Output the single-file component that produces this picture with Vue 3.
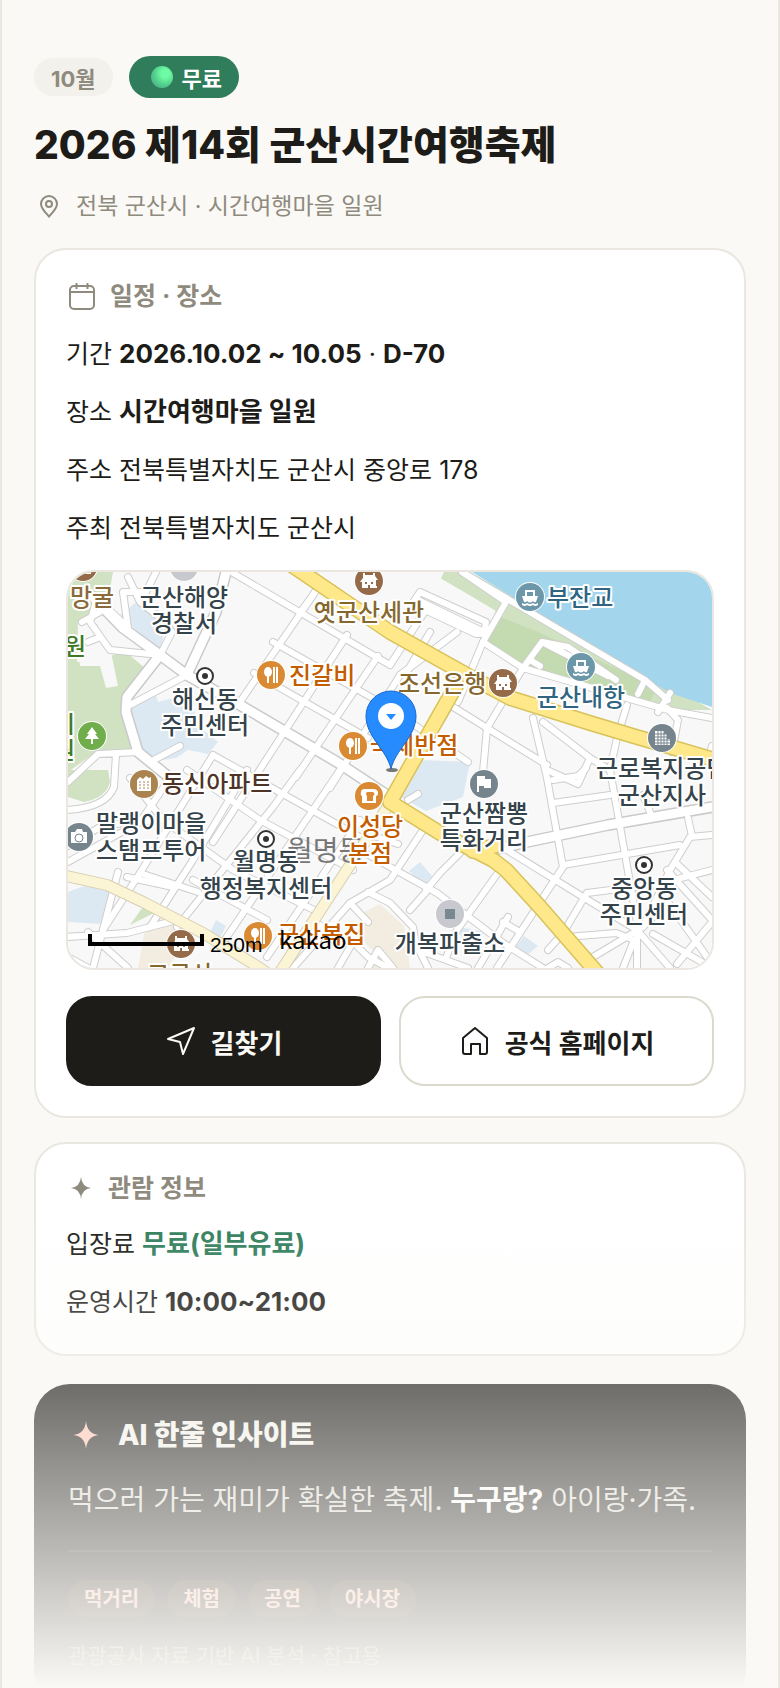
<template>
    <main class="page">
        <header class="hero">
            <div class="badges">
                <span class="badge month">10월</span>
                <span class="badge free"><span class="dot"></span>무료</span>
            </div>
            <h1 class="title">2026 제14회 군산시간여행축제</h1>
            <p class="region">
                <svg class="region-icon" viewBox="0 0 24 24" aria-hidden="true">
                    <path d="M12 22.5C8 18 4 14.5 4 10a8 8 0 0 1 16 0c0 4.500-4 8-8 12.500z" />
                    <circle cx="12" cy="10" r="3" />
                </svg>
                전북 군산시 · 시간여행마을 일원
            </p>
        </header>

        <section class="card">
            <h2 class="card-title">
                <svg class="card-icon" viewBox="0 0 32 32" aria-hidden="true">
                    <rect x="4" y="6" width="24" height="23" rx="4" />
                    <path d="M4 12h24M10.500 3v6M21.500 3v6" />
                </svg>
                일정 · 장소
            </h2>
            <p v-for="row in schedule" :key="row.label" class="row">
                {{ row.label }}
                <template v-if="row.strong"><strong>{{ row.strong }}</strong></template>
                <template v-if="row.text">{{ row.text }}</template>
                <template v-if="row.dday"> · <strong>{{ row.dday }}</strong></template>
            </p>

            <!-- Map -->
            <div class="map">
                <svg class="map-canvas" viewBox="0 0 644 396" preserveAspectRatio="xMidYMid slice" role="img" aria-label="지도">
                    <rect width="644" height="396" fill="#f8f8f8" />
                    <path v-for="(area, i) in areas" :key="'a' + i" :d="area.d" :fill="area.fill" />
                    <g fill="none" stroke-linejoin="round" stroke-linecap="round">
                        <path v-for="(d, i) in minorRoads" :key="'mc' + i" :d="d" stroke="#cecece" stroke-width="8" />
                        <path v-for="(d, i) in wideRoads" :key="'wc' + i" :d="d" stroke="#cacaca" stroke-width="12" />
                        <path v-for="(d, i) in minorRoads" :key="'m' + i" :d="d" stroke="#fff" stroke-width="6" />
                        <path v-for="(d, i) in wideRoads" :key="'w' + i" :d="d" stroke="#fff" stroke-width="9" />
                        <path v-for="(d, i) in paleRoads" :key="'pc' + i" :d="d" stroke="#d6cfb4" stroke-width="12" />
                        <path v-for="(d, i) in paleRoads" :key="'p' + i" :d="d" stroke="#fbf5d5" stroke-width="10" />
                        <path v-for="(d, i) in mainRoads" :key="'yc' + i" :d="d" stroke="#d8c25a" stroke-width="16" />
                        <path v-for="(d, i) in mainRoads" :key="'y' + i" :d="d" stroke="#ffe88a" stroke-width="13" />
                    </g>

                    <text class="district" x="219" y="289">월명동</text>

                    <g v-for="(poi, i) in pois" :key="'poi' + i" :transform="`translate(${poi.x} ${poi.y})`">
                        <circle r="15" fill="#fff" />
                        <circle r="14" :fill="poi.fill" />
                        <g v-if="poi.kind === 'food'" fill="#fff">
                            <ellipse cx="-3" cy="-3" rx="4" ry="5" />
                            <path d="M-4 0h2v8h-2zM2 -8h2v16h-2zM5 -8h2v16h-2z" />
                        </g>
                        <path v-else-if="poi.kind === 'house'" fill="#fff" fill-rule="evenodd" d="M-6-8h2v2h8v-2h2v3l3 4H7v6h1v2H-8V7h1V1h-2l3-4zM-4 1v2h2V1zM2 1v2h2V1zM-1 4v3h2V4z" />
                        <path v-else-if="poi.kind === 'ship'" fill="#fff" fill-rule="evenodd" d="M-5-7H5v6h3L6 5q-2 1-3-1-3 3-6 0-1 2-3 1L-8-1h3zM-3-5v4h6v-4zM-8 6q3 2 5 0 3 2 6 0 2 2 5 0v2q-3 2-5 0-3 2-6 0-2 2-5 0z" />
                        <path v-else-if="poi.kind === 'tree'" fill="#fff" d="M0-9l5 7H3l4 5H1v5h-2V3h-6l4-5h-2z" />
                        <g v-else-if="poi.kind === 'building'">
                            <path fill="#fff" d="M-7-7H2v3h3v5h3v6H-7z" />
                            <path :stroke="poi.fill" d="M-4-7V7M-1-7V7M2-7V7M5-4V7M-7-4H5M-7-1H5M-7 2H8M-7 5H8" />
                        </g>
                        <g v-else-if="poi.kind === 'apartment'">
                            <path fill="#fff" d="M-7-4l3-3 3 2 3-3 3 2 2-1V7H-7z" />
                            <path :stroke="poi.fill" stroke-dasharray="2 2" d="M-5-2H6M-5 1H6M-5 4H6" />
                        </g>
                        <g v-else-if="poi.kind === 'camera'">
                            <path fill="#fff" d="M-8-5h4l2-3h5l1 3h4V6H-8z" />
                            <circle r="4" fill="none" cy="1" :stroke="poi.fill" stroke-width="1" />
                        </g>
                        <g v-else-if="poi.kind === 'bread'">
                            <path fill="#fff" d="M-8-4q0-3 4-3h8q5 0 5 4Q9 0 7 0v7H-7V0q-2-1-1-4z" />
                            <path :fill="poi.fill" d="M-2-4h6q3 2 0 4v5h-6V0q-2-2 0-4z" />
                        </g>
                        <path v-else-if="poi.kind === 'flag'" fill="#fff" d="M-7-8h2H1v3h6V4H0V2h-5v6h-2z" />
                        <rect v-else-if="poi.kind === 'police'" x="-5" y="-5" width="10" height="10" fill="#788890" />
                    </g>

                    <g v-for="(spot, i) in offices" :key="'o' + i" :transform="`translate(${spot.x} ${spot.y})`">
                        <circle r="8" fill="#fff" stroke="#333" stroke-width="2" />
                        <circle r="3" fill="#333" />
                    </g>

                    <text
                        v-for="(label, i) in labels"
                        :key="'l' + i"
                        class="label"
                        :x="label.x"
                        :y="label.y"
                        :fill="label.fill || '#35434b'"
                        :text-anchor="label.anchor || 'middle'"
                    >{{ label.text }}</text>

                    <!-- Pin -->
                    <ellipse cx="324" cy="198" rx="6" ry="2" fill="#777" />
                    <path d="M323 197C319 178 298 165 298 144a25 25 0 0 1 50 0c0 21-21 34-25 53z" fill="#258bff" stroke="#1b68cc" />
                    <circle cx="323" cy="144" r="13" fill="#fff" />
                    <path d="M318 142h10l-5 6z" fill="#258bff" />

                    <!-- Scale -->
                    <path d="M22 362v10h112v-10" fill="none" stroke="#000" stroke-width="4" />
                    <text class="scale" x="142" y="380">250m</text>
                    <text class="provider" x="211" y="377">kakao</text>
                </svg>
            </div>

            <div class="actions">
                <button class="action primary" type="button">
                    <svg class="action-icon" viewBox="0 0 32 32" aria-hidden="true">
                        <path d="M29 3L18 29l-3-12L3 14z" />
                    </svg>
                    길찾기
                </button>
                <a class="action secondary" href="#">
                    <svg class="action-icon" viewBox="0 0 32 32" aria-hidden="true">
                        <path d="M4 13L16 3l12 10v14a2 2 0 0 1-2 2h-5V19h-9v10H6a2 2 0 0 1-2-2z" />
                    </svg>
                    공식 홈페이지
                </a>
            </div>
        </section>

        <section class="card">
            <h2 class="card-title">
                <svg class="spark" viewBox="0 0 24 24" aria-hidden="true"><path :d="sparkPath" /></svg>
                관람 정보
            </h2>
            <p class="row">입장료 <strong class="fee">무료(일부유료)</strong></p>
            <p class="row">운영시간 <strong>10:00~21:00</strong></p>
        </section>

        <section class="insight">
            <h2 class="insight-title">
                <svg class="insight-spark" viewBox="0 0 24 24" aria-hidden="true"><path :d="sparkPath" /></svg>
                AI 한줄 인사이트
            </h2>
            <p class="insight-text">먹으러 가는 재미가 확실한 축제. <strong>누구랑?</strong> 아이랑·가족.</p>
            <div class="tags">
                <span v-for="tag in tags" :key="tag" class="tag">{{ tag }}</span>
            </div>
            <p class="source">관광공사 자료 기반 AI 분석 · 참고용</p>
        </section>

        <div class="fade"></div>
    </main>
</template>

<script setup>
const schedule = [
    { label: '기간', strong: '2026.10.02 ~ 10.05', dday: 'D-70' },
    { label: '장소', strong: '시간여행마을 일원' },
    { label: '주소', text: '전북특별자치도 군산시 중앙로 178' },
    { label: '주최', text: '전북특별자치도 군산시' }
];

const tags = ['먹거리', '체험', '공연', '야시장'];

const sparkPath = 'M12 0Q13 11 23 12Q13 13 12 24Q11 13 1 12Q11 11 12 0z';

const areas = [
    // parks
    { fill: '#d0e2c2', d: 'M0 0H45L38 40L10 50L9 90L45 83L58 80L78 97L56 133L59 160L68 180H42L25 182L0 200z' },
    { fill: '#d0e2c2', d: 'M0 198H40L42 210Q38 226 16 230L0 225z' },
    { fill: '#d0e2c2', d: 'M77 332L88 340L62 353z' },
    { fill: '#f8f8f8', d: 'M9 72L48 72L44 85L50 114L38 116L32 94L12 94z' },
    { fill: '#d0e2c2', d: 'M378 0H402L644 138L600 138L455 94L418 70L372 8z' },
    { fill: '#c4dbb1', d: 'M430 44L470 60L590 116L580 132L455 94L419 72z' },
    { fill: '#f8f8f8', d: 'M372 6L428 38L416 72L340 30L352 0H374z' },
    { fill: '#d0e2c2', d: 'M376 0H398L432 26L428 39L373 6z' },
    // sea and blocks
    { fill: '#a3d6ec', d: 'M404 0H644V135L602 121L540 84z' },
    { fill: '#dce9f2', d: 'M52 43L72 27L100 48L92 78L70 60z' },
    { fill: '#dce9f2', d: 'M22 52H30V63L24 60z' },
    { fill: '#dce9f2', d: 'M62 133L88 123L90 130L120 122L132 155L150 170L140 182L120 178L108 186L82 190L66 172z' },
    { fill: '#dce9f2', d: 'M0 320L22 312L45 322L35 352L0 350z' },
    { fill: '#dce9f2', d: 'M352 188L402 190L395 225L358 239L329 223z' },
    { fill: '#dce9f2', d: 'M341 299L352 290L364 304L356 314z' },
    { fill: '#dce9f2', d: 'M392 355L416 360L408 375L393 366z' },
    { fill: '#dce9f2', d: 'M456 364L470 374L458 384L446 377z' },
    { fill: '#dce9f2', d: 'M148 348L158 354L152 366L142 360z' },
    { fill: '#f3ece1', d: 'M296 340L312 332L336 354L342 396H300L306 380L292 366z' },
    { fill: '#f3ece1', d: 'M78 352L104 342L120 366L100 396H70z' }
];

const minorRoads = [
    'M165 1L322 93',
    'M272 24L252 13L172 130',
    'M205 70L322 136L400 190',
    'M279 63L145 270',
    'M310 84L228 205',
    'M186 101L300 166',
    'M332 103L262 216',
    'M234 38L252 13',
    'M145 183L72 301L35 358',
    'M179 198L125 288L82 355',
    'M232 198L205 235L109 355',
    'M272 198L152 375',
    'M292 248L199 385',
    'M119 198L192 248L285 298',
    'M145 183L292 265',
    'M95 248L165 298L252 341',
    'M72 301L130 320M125 308L199 348',
    'M59 305L105 315',
    'M-2 275L32 255L60 250L95 248',
    'M70 180L30 182L0 210M48 182L46 215Q38 236 -2 238',
    'M62 206L95 248M102 206L72 250L0 290',
    'M-2 365L59 361L109 348M50 300L25 396M20 360L60 396M0 385L20 396',
    'M62 133L119 103M29 26L22 50L42 78L92 83',
    'M14 50L32 40M20 70L30 66M29 26L60 56L55 20L78 20L88 0',
    'M60 5L72 30L95 48L104 60L92 83',
    'M82 190L112 174',
    'M322 93L359 36L396 56M332 103L389 60M340 98L362 60',
    'M415 70L438 30L394 0M415 70L455 96L600 138L644 146',
    'M344 32L352 20L418 50L416 62L408 62zM350 28L412 58',
    'M455 96L474 70L540 104M462 88L472 94M474 70L500 75L548 108',
    'M394 0L577 108L600 128M577 108L570 122M602 121L590 140',
    'M455 96L419 156L415 200M415 70L390 130',
    'M382 133L419 156L479 193M475 150L522 186L542 198M522 186L510 212L479 198',
    'M382 133L372 150M559 133L549 166L542 198',
    'M465 146L479 206L495 295',
    'M599 136L610 148L604 180M644 174L640 190',
    'M355 258L322 308L282 331L225 396',
    'M292 278L322 295L369 321L435 371L475 396',
    'M340 228L350 222M300 262L330 272',
    'M322 331L345 355L348 372L360 396M300 320L322 331M342 375L400 396',
    'M395 278L372 301L358 318M358 320L342 338',
    'M432 298L389 358L378 386',
    'M495 295L429 396M435 350L452 360M440 345L410 396',
    'M439 278L515 325L569 358L602 396',
    'M644 263L622 265L602 298L575 355L525 385',
    'M495 293L612 273M485 208L510 204L518 196M485 231L542 223M575 223L582 240M620 246L624 264',
    'M519 321L590 312L644 298M519 321L495 361L480 378',
    'M607 290L644 325M599 298L644 348M609 392L644 350M585 362L644 396M575 355L600 330L644 392',
    'M499 365L548 361L566 368L555 396',
    'M542 198L569 350L569 396',
    'M270 396L285 370L300 385L320 396M282 331L300 350M250 352L290 374',
    'M480 396L490 390L500 396M300 396L310 378L325 396'
];

const wideRoads = [
    'M159 -4L148 40L122 96L119 103L172 133L269 190L322 225',
    'M24 24L55 56L92 83L119 103',
    'M92 83L59 125L58 140L70 180L102 206',
    'M425 278L459 270L540 253L650 234'
];

const paleRoads = [
    'M322 231L305 258L212 400',
    'M-6 303L39 313L75 330L135 361L192 396L200 402'
];

const mainRoads = [
    'M405 279L427 274',
    'M389 112L322 230L372 261L425 288L438 298L472 335L525 396L532 404',
    'M222 -8L322 60L399 103L442 126L522 151L562 163L654 190'
];

const pois = [
    { kind: 'house', x: 15, y: -5, fill: '#946a49' },
    { kind: 'none', x: 116, y: -5, fill: '#c8c9ce' },
    { kind: 'house', x: 301, y: 9, fill: '#946a49' },
    { kind: 'food', x: 203, y: 103, fill: '#d98a32' },
    { kind: 'tree', x: 24, y: 164, fill: '#6fae4b' },
    { kind: 'food', x: 285, y: 174, fill: '#d98a32' },
    { kind: 'apartment', x: 76, y: 212, fill: '#a9844f' },
    { kind: 'ship', x: 462, y: 25, fill: '#6c97a8' },
    { kind: 'ship', x: 513, y: 95, fill: '#6c97a8' },
    { kind: 'house', x: 435, y: 111, fill: '#946a49' },
    { kind: 'building', x: 594, y: 166, fill: '#76858d' },
    { kind: 'camera', x: 11, y: 265, fill: '#76858d' },
    { kind: 'bread', x: 301, y: 224, fill: '#d98a32' },
    { kind: 'food', x: 190, y: 364, fill: '#d98a32' },
    { kind: 'house', x: 113, y: 372, fill: '#946a49' },
    { kind: 'flag', x: 416, y: 212, fill: '#76858d' },
    { kind: 'police', x: 382, y: 342, fill: '#c8c9ce' }
];

const offices = [
    { x: 137, y: 104 },
    { x: 198, y: 267 },
    { x: 576, y: 293 }
];

const labels = [
    { text: '망굴', x: 2, y: 34, fill: '#8a6a3a', anchor: 'start' },
    { text: '군산해양', x: 116, y: 34 },
    { text: '경찰서', x: 116, y: 60 },
    { text: '원', x: 18, y: 83, fill: '#3f7a26', anchor: 'end' },
    { text: '시', x: 7, y: 161, fill: '#3f7a26', anchor: 'end' },
    { text: '원', x: 7, y: 187, fill: '#3f7a26', anchor: 'end' },
    { text: '해신동', x: 137, y: 136 },
    { text: '주민센터', x: 137, y: 162 },
    { text: '옛군산세관', x: 301, y: 49, fill: '#86682f' },
    { text: '진갈비', x: 221, y: 112, fill: '#c45c00', anchor: 'start' },
    { text: '국제반점', x: 302, y: 182, fill: '#c45c00', anchor: 'start' },
    { text: '조선은행', x: 330, y: 120, fill: '#86682f', anchor: 'start' },
    { text: '부잔교', x: 479, y: 34, fill: '#2f6580', anchor: 'start' },
    { text: '군산내항', x: 513, y: 134, fill: '#2f6580' },
    { text: '근로복지공단', x: 528, y: 205, anchor: 'start' },
    { text: '군산지사', x: 594, y: 232 },
    { text: '동신아파트', x: 94, y: 220, fill: '#4d3427', anchor: 'start' },
    { text: '말랭이마을', x: 28, y: 260, anchor: 'start' },
    { text: '스탬프투어', x: 28, y: 287, anchor: 'start' },
    { text: '월명동', x: 198, y: 298 },
    { text: '행정복지센터', x: 198, y: 325 },
    { text: '이성당', x: 302, y: 263, fill: '#c45c00' },
    { text: '본점', x: 302, y: 290, fill: '#c45c00' },
    { text: '군산복집', x: 209, y: 371, fill: '#c45c00', anchor: 'start' },
    { text: '고군산', x: 112, y: 411, fill: '#86682f' },
    { text: '군산짬뽕', x: 416, y: 250 },
    { text: '특화거리', x: 416, y: 277 },
    { text: '개복파출소', x: 382, y: 380 },
    { text: '중앙동', x: 576, y: 325 },
    { text: '주민센터', x: 576, y: 351 }
];
</script>

<style>
body {
    background: #faf9f5;
}
</style>

<style scoped>
h1,
h2,
p {
    margin: 0;
}

.page {
    position: relative;
    overflow: hidden;
    box-sizing: border-box;
    height: 100vh;
    padding: 56px 32px 0;
    border: 0 solid #e9e7e0;
    border-width: 0 2px;
    background: #faf9f5;
    color: #1d1c18;
    font-family: Inter, 'Noto Sans CJK KR', sans-serif;
    font-size: 25px;
}

.badges {
    display: flex;
    align-items: center;
    gap: 16px;
}

.badge {
    display: flex;
    align-items: center;
    box-sizing: border-box;
    border-radius: 21px;
    font-size: 22px;
    font-weight: 700;
}

.month {
    height: 38px;
    padding: 0 17px;
    background: #f2f1ec;
    color: #8f8a7e;
}

.free {
    height: 42px;
    gap: 9px;
    padding: 0 17px 0 22px;
    background: #2f7d5b;
    color: #fff;
}

.dot {
    width: 22px;
    height: 22px;
    border-radius: 50%;
    background: radial-gradient(circle at 65% 35%, #6dfba3 0 20%, #53cf8d 55%, #4b9b87 100%);
}

.title {
    padding-top: 18px;
    font-size: 39px;
    font-weight: 800;
    line-height: 58px;
}

.region {
    display: flex;
    align-items: center;
    gap: 15px;
    padding: 16px 0 26px 3px;
    color: #8f8a7e;
    font-size: 23px;
    line-height: 32px;
}

.region-icon {
    width: 24px;
    height: 24px;
    fill: none;
    stroke: currentColor;
    stroke-width: 2;
}

.card {
    margin-bottom: 24px;
    padding: 30px;
    border: 2px solid #e9e7e0;
    border-radius: 32px;
    background: #fff;
}

.card-title {
    display: flex;
    align-items: center;
    gap: 12px;
    margin-bottom: 20px;
    color: #8f8a7e;
    font-size: 25px;
    font-weight: 700;
    line-height: 28px;
}

.card-icon {
    width: 32px;
    height: 32px;
    fill: none;
    stroke: currentColor;
    stroke-width: 2;
}

.spark {
    width: 22px;
    height: 22px;
    padding: 0 4px;
    fill: currentColor;
}

.row {
    line-height: 44px;
}

.row + .row {
    margin-top: 14px;
}

.row strong {
    font-size: 26px;
    font-weight: 700;
}

.row .fee {
    color: #2f7d5b;
}

.map {
    overflow: hidden;
    margin-top: 20px;
    border: 2px solid #ebe7e0;
    border-radius: 28px;
}

.map-canvas {
    display: block;
    width: 100%;
    height: 396px;
}

.label {
    font-family: 'Noto Sans CJK KR', sans-serif;
    font-size: 24px;
    font-weight: 500;
    stroke: #fff;
    stroke-width: 4;
    stroke-linejoin: round;
    paint-order: stroke;
}

.district {
    fill: #777;
    font-family: 'Noto Sans CJK KR', sans-serif;
    font-size: 28px;
}

.scale {
    font-family: 'Liberation Sans', Arial, sans-serif;
    font-size: 21px;
}

.provider {
    font-family: 'Noto Sans CJK KR', sans-serif;
    font-size: 24px;
}

.actions {
    display: flex;
    gap: 18px;
    margin-top: 26px;
}

.action {
    display: flex;
    flex: 1;
    align-items: center;
    justify-content: center;
    gap: 14px;
    box-sizing: border-box;
    height: 90px;
    padding: 0;
    border: 2px solid #1d1c18;
    border-radius: 26px;
    font-family: inherit;
    font-size: 26px;
    font-weight: 700;
    text-decoration: none;
    cursor: pointer;
}

.primary {
    background: #1d1c18;
    color: #faf9f5;
}

.secondary {
    border-color: #dcd9cf;
    background: #fff;
    color: #1d1c18;
}

.action-icon {
    width: 32px;
    height: 32px;
    fill: none;
    stroke: currentColor;
    stroke-width: 2;
    stroke-linejoin: round;
}

.insight {
    margin-top: 28px;
    padding: 34px;
    border-radius: 36px;
    background: #1d1c18;
    color: #dddbd4;
}

.insight-title {
    display: flex;
    align-items: center;
    gap: 18px;
    padding-left: 4px;
    color: #f5f3ed;
    font-size: 28px;
    font-weight: 800;
    line-height: 34px;
}

.insight-spark {
    width: 28px;
    height: 28px;
    fill: #ffc4b0;
}

.insight-text {
    margin-top: 26px;
    font-size: 28px;
    line-height: 44px;
}

.insight-text strong {
    color: #fff;
    font-weight: 700;
}

.tags {
    display: flex;
    flex-wrap: wrap;
    gap: 12px;
    margin-top: 28px;
    padding-top: 28px;
    border-top: 2px solid #34332f;
}

.tag {
    padding: 0 16px;
    border-radius: 19px;
    background: #35291f;
    color: #ffc4b0;
    font-size: 20px;
    font-weight: 700;
    line-height: 38px;
}

.source {
    margin-top: 22px;
    color: #8f8a7e;
    font-size: 21px;
    line-height: 32px;
}

.fade {
    position: absolute;
    right: 0;
    bottom: 0;
    left: 0;
    height: 480px;
    background: linear-gradient(rgba(250, 249, 245, 0), #faf9f5);
    pointer-events: none;
}
</style>
